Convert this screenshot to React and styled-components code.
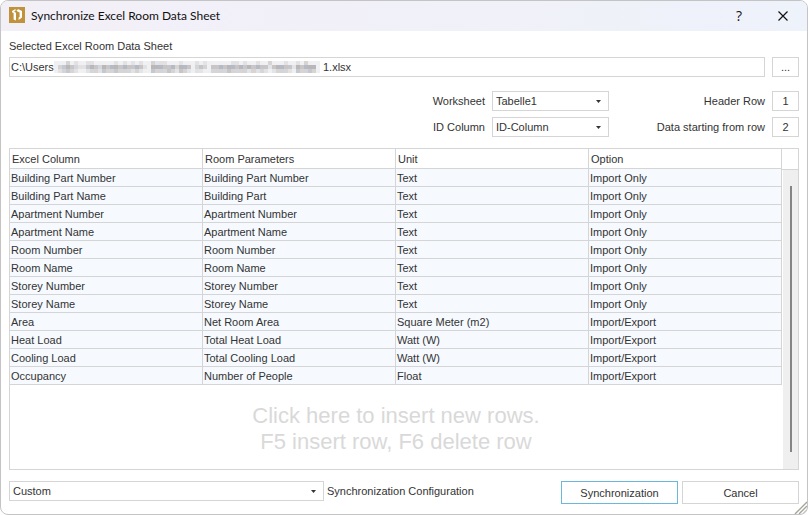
import React from "react";
import styled, { createGlobalStyle } from "styled-components";

const columns = ["Excel Column", "Room Parameters", "Unit", "Option"];

const rows = [
  ["Building Part Number", "Building Part Number", "Text", "Import Only"],
  ["Building Part Name", "Building Part", "Text", "Import Only"],
  ["Apartment Number", "Apartment Number", "Text", "Import Only"],
  ["Apartment Name", "Apartment Name", "Text", "Import Only"],
  ["Room Number", "Room Number", "Text", "Import Only"],
  ["Room Name", "Room Name", "Text", "Import Only"],
  ["Storey Number", "Storey Number", "Text", "Import Only"],
  ["Storey Name", "Storey Name", "Text", "Import Only"],
  ["Area", "Net Room Area", "Square Meter (m2)", "Import/Export"],
  ["Heat Load", "Total Heat Load", "Watt (W)", "Import/Export"],
  ["Cooling Load", "Total Cooling Load", "Watt (W)", "Import/Export"],
  ["Occupancy", "Number of People", "Float", "Import/Export"],
];

// darkness of the mosaic that hides the middle of the path, one digit per block
const mosaic = [
  "111312112211111212121211322211121112121111112212112113111211213111",
  "134543224543545545445421555445355413431445455454545442455442545551",
  "123432112332433433323211433343243212211333343333232321233321433431",
];
const tints = ["#70707c", "#7a6f68", "#6b7690"];

const App = () => (
  <>
    <GlobalStyle />
    <Dialog>
      <TitleBar>
        <Logo />
        <h1>Synchronize Excel Room Data Sheet</h1>
        <TitleButton aria-label="Help">?</TitleButton>
        <TitleButton aria-label="Close">
          <svg width="10" height="10" viewBox="0 0 10 10">
            <path d="M0.5 0.5 L9.5 9.5 M9.5 0.5 L0.5 9.5" stroke="#111" strokeWidth="1.2" />
          </svg>
        </TitleButton>
      </TitleBar>
      <Body>
        <label htmlFor="path">Selected Excel Room Data Sheet</label>
        <FileRow>
          <PathField>
            <input id="path" defaultValue="C:\Users" />
            <Redaction />
            <input aria-label="File name" defaultValue="1.xlsx" />
          </PathField>
          <BrowseButton>...</BrowseButton>
        </FileRow>
        <Settings>
          <label htmlFor="worksheet">Worksheet</label>
          <Dropdown id="worksheet" value="Tabelle1" />
          <label htmlFor="header">Header Row</label>
          <NumberField id="header" defaultValue="1" />
          <label htmlFor="idcolumn">ID Column</label>
          <Dropdown id="idcolumn" value="ID-Column" />
          <label htmlFor="start">Data starting from row</label>
          <NumberField id="start" defaultValue="2" />
        </Settings>
        <Grid>
          <Sheet>
            <Table>
              <thead>
                <tr>
                  {columns.map((name) => (
                    <th key={name}>{name}</th>
                  ))}
                </tr>
              </thead>
              <tbody>
                {rows.map((row) => (
                  <tr key={row[0]}>
                    {row.map((cell, i) => (
                      <td key={i}>{cell}</td>
                    ))}
                  </tr>
                ))}
              </tbody>
            </Table>
            <Hint>
              Click here to insert new rows.
              <br />
              F5 insert row, F6 delete row
            </Hint>
          </Sheet>
          <Scroll>
            <Track>
              <Thumb />
            </Track>
          </Scroll>
        </Grid>
        <Footer>
          <Dropdown id="config" value="Custom" />
          <label htmlFor="config">Synchronization Configuration</label>
          <Actions>
            <Button $primary>Synchronization</Button>
            <Button>Cancel</Button>
          </Actions>
        </Footer>
      </Body>
      <Grip width="13" height="13" viewBox="0 0 13 13">
        <path d="M1 13 L13 1 M5 13 L13 5 M9 13 L13 9" stroke="#a5a59a" strokeWidth="1.4" />
      </Grip>
    </Dialog>
  </>
);

const Dropdown = ({ id, value }) => (
  <SelectBox>
    <select id={id} defaultValue={value}>
      <option>{value}</option>
    </select>
    <svg width="5" height="3" viewBox="0 0 5 3">
      <path d="M0 0 H5 L2.5 3 Z" fill="#333" />
    </svg>
  </SelectBox>
);

const Logo = () => (
  <svg width="16" height="16" viewBox="0 0 16 16">
    <rect width="16" height="16" fill="#c0923c" />
    <path
      d="M3 4 L6 2.3 L7.3 3 L5.5 4 V5 L7 5.8 V13.5 L4.6 12.4 V6 L3 5.2 Z M7.6 3 L9.5 2.2 L13 4 V10.5 L9.6 13 V10.6 L10.6 10 V5.5 L8 4.2 Z"
      fill="#fff"
    />
  </svg>
);

const Redaction = () => (
  <svg width="266" height="12" viewBox="0 0 264 12" preserveAspectRatio="none" shapeRendering="crispEdges" aria-hidden="true">
    {mosaic.map((line, y) =>
      line.split("").map((n, x) => (
        <rect
          key={`${x}-${y}`}
          x={x * 4}
          y={y * 4}
          width="4"
          height="4"
          fill={tints[(x * 2 + y) % 3]}
          opacity={n * 0.1}
        />
      ))
    )}
  </svg>
);

const GlobalStyle = createGlobalStyle`
  * {
    box-sizing: border-box;
  }
  body {
    margin: 0;
    background: #fff;
  }
  body, input, select, button {
    font-family: "Liberation Sans", Arial, sans-serif;
    font-size: 11px;
    color: #333;
  }
`;

const Dialog = styled.main`
  position: relative;
  display: flex;
  flex-direction: column;
  min-height: 100vh;
  border: 1px solid #c4c4c4;
  border-radius: 8px;
  background: #fff;
  overflow: hidden;
`;

const TitleBar = styled.header`
  display: flex;
  align-items: center;
  height: 30px;
  padding: 0 2px 2px 8px;
  background: linear-gradient(90deg, #f3eff7, #eef2fa);
  h1 {
    flex: 1;
    margin: 0 0 0 6px;
    font-family: Lato, sans-serif;
    font-size: 12px;
    font-weight: 400;
    color: #111;
  }
`;

const TitleButton = styled.button`
  width: 44px;
  height: 28px;
  padding: 0;
  border: 0;
  background: none;
  font-family: "Open Sans", sans-serif;
  font-size: 14px;
  color: #111;
`;

const Body = styled.div`
  flex: 1;
  display: flex;
  flex-direction: column;
  padding: 8px 8px 10px;
  label {
    line-height: 14px;
  }
`;

const FileRow = styled.div`
  display: flex;
  gap: 7px;
  margin-top: 4px;
`;

const PathField = styled.div`
  flex: 1;
  display: flex;
  align-items: center;
  height: 20px;
  border: 1px solid #d5d5d5;
  input {
    width: 43px;
    height: 16px;
    padding: 0;
    border: 0;
    margin-left: 1px;
  }
  svg + input {
    flex: 1;
    margin-left: 3px;
  }
`;

const BrowseButton = styled.button`
  width: 27px;
  height: 20px;
  padding: 0;
  border: 1px solid #d5d5d5;
  background: #fff;
`;

const Settings = styled.div`
  display: grid;
  grid-template-columns: 1fr 117px 149px 27px;
  align-items: center;
  gap: 6px 7px;
  margin: 14px 0 11px;
  label {
    text-align: right;
  }
`;

const SelectBox = styled.div`
  position: relative;
  select {
    display: block;
    width: 100%;
    height: 20px;
    padding: 0 20px 0 3px;
    border: 1px solid #d5d5d5;
    border-radius: 0;
    appearance: none;
    background: #fff;
  }
  svg {
    position: absolute;
    top: 9px;
    right: 8px;
    pointer-events: none;
  }
`;

const NumberField = styled.input`
  width: 100%;
  height: 20px;
  padding: 0;
  border: 1px solid #d5d5d5;
  text-align: center;
`;

const Grid = styled.div`
  flex: 1;
  display: flex;
  border: 1px solid #d5d5d5;
`;

const Sheet = styled.div`
  flex: 1;
  display: flex;
  flex-direction: column;
`;

const Table = styled.table`
  width: 100%;
  table-layout: fixed;
  border-collapse: separate;
  border-spacing: 0;
  th, td {
    height: 18px;
    padding: 0 1px;
    border-right: 1px solid #d5d5d5;
    border-bottom: 1px solid #d5d5d5;
    font-weight: 400;
    line-height: 14px;
    text-align: left;
    background: #f6faff;
  }
  th {
    height: 20px;
    padding: 0 2px;
    background: #fff;
  }
`;

const Hint = styled.p`
  margin: 18px 0 14px;
  font-size: 22px;
  line-height: 26px;
  text-align: center;
  color: #d9d9d9;
`;

const Scroll = styled.div`
  display: flex;
  flex-direction: column;
  width: 16px;
  padding-left: 1px;
  &::before {
    content: "";
    height: 20px;
    margin-left: -1px;
    border-bottom: 1px solid #d5d5d5;
  }
`;

const Track = styled.div`
  flex: 1;
  padding: 16px 6px 17px 7px;
  display: flex;
  background: #efefef;
`;

const Thumb = styled.div`
  width: 2px;
  background: #858585;
`;

const Footer = styled.footer`
  display: flex;
  align-items: flex-start;
  margin-top: 11px;
  > div:first-child {
    width: 315px;
  }
  label {
    margin: 3px 0 0 3px;
  }
`;

const Actions = styled.div`
  display: flex;
  gap: 4px;
  margin-left: auto;
`;

const Button = styled.button`
  width: 117px;
  height: 23px;
  padding: 0;
  border: 1px solid ${({ $primary }) => ($primary ? "#6cb8dc" : "#d5d5d5")};
  background: #fff;
`;

const Grip = styled.svg`
  position: absolute;
  right: 0;
  bottom: 0;
`;

export default App;
